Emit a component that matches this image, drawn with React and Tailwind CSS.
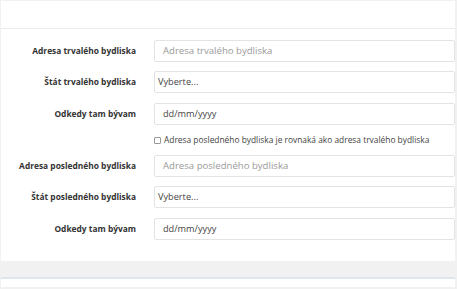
import React from "react";

const font = { fontFamily: '"Open Sans", "Noto Sans", sans-serif' };

function Row({ label, children }) {
  return (
    <div className="flex items-center h-[22px]">
      <div className="w-[135px] shrink-0 text-right text-[8.4px] font-bold text-[#333]">{label}</div>
      <div className="ml-[18px] flex-1">{children}</div>
    </div>
  );
}

function Input({ placeholder, value, select }) {
  return (
    <div
      className={`h-[22px] border border-[#e3e3e3] rounded-[2px] bg-white flex items-center ${select ? "pl-[3px]" : "pl-[8px]"} ${placeholder ? "text-[#9a9a9a] text-[9.6px]" : "text-[#444] text-[9.2px]"}`}
    >
      {placeholder || value}
    </div>
  );
}

export default function App() {
  return (
    <div className="w-[457px] h-[289px] bg-[#f1f1f1] overflow-hidden" style={font}>
      <div className="ml-px mr-[2px] mt-px bg-white h-[260px] flex flex-col">
        <div className="h-[28px] border-b border-[#ececec]"></div>
        <div className="flex flex-col pt-[11px]">
          <Row label="Adresa trvalého bydliska">
            <Input placeholder="Adresa trvalého bydliska" />
          </Row>
          <div className="h-[9px]" />
          <Row label="Štát trvalého bydliska">
            <Input value="Vyberte..." select />
          </Row>
          <div className="h-[10px]" />
          <Row label="Odkedy tam bývam">
            <Input value="dd/mm/yyyy" />
          </Row>
          <div className="h-[9px]" />
          <div className="flex items-center h-[12px] ml-[153px] text-[8.4px] text-[#444]">
            <span className="inline-block w-[7px] h-[7px] border border-[#999] rounded-[1px] mr-[3px]"></span>
            Adresa posledného bydliska je rovnaká ako adresa trvalého bydliska
          </div>
          <div className="h-[9px]" />
          <Row label="Adresa posledného bydliska">
            <Input placeholder="Adresa posledného bydliska" />
          </Row>
          <div className="h-[9px]" />
          <Row label="Štát posledného bydliska">
            <Input value="Vyberte..." select />
          </Row>
          <div className="h-[10px]" />
          <Row label="Odkedy tam bývam">
            <Input value="dd/mm/yyyy" />
          </Row>
        </div>
      </div>
      <div className="h-[16px]" />
      <div className="ml-px mr-[2px] h-[10px] bg-white border-t-2 border-[#dde6ee]" />
    </div>
  );
}
